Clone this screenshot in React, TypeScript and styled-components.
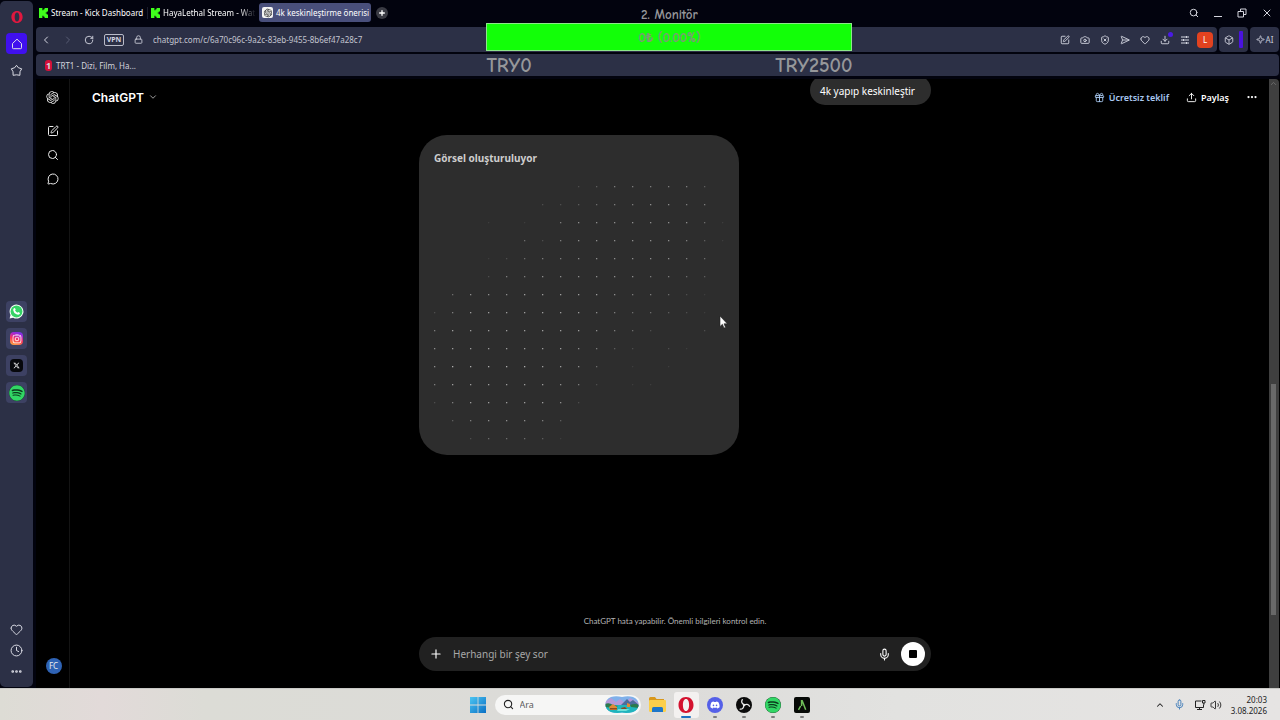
import React from 'react';
import styled, { createGlobalStyle } from 'styled-components';
import {
  ChevronLeft, ChevronRight, ChevronDown, ChevronUp, RotateCw, Lock, Plus, Search, SquarePen, Camera, ShieldX,
  SendHorizontal, Heart, Download, Box, Clock, Ellipsis, X, Gift, Mic, MessageCircle, Upload, Volume2, Sparkle,
} from 'lucide-react';
import { FaInstagram, FaXTwitter, FaSpotify, FaDiscord } from 'react-icons/fa6';
import { RiOpenaiFill } from 'react-icons/ri';

const ui = `"Segoe UI", "Noto Sans", "Open Sans", sans-serif`;

const GlobalStyle = createGlobalStyle`
  * { box-sizing: border-box; }
  body { margin: 0; background: #02030e; font-family: ${ui}; font-size: 8px; color: #fff; }
  button, input { font: inherit; color: inherit; border: 0; background: none; padding: 0; margin: 0; outline: 0; }
  a { color: inherit; text-decoration: none; }
  svg { display: block; flex: none; }
`;

const Desktop = styled.div`
  position: relative;
  min-height: 100vh;
  display: flex;
  flex-direction: column;
`;

const Browser = styled.div`
  flex: 1;
  display: flex;
  gap: 3px;
`;

const OperaSidebar = styled.nav`
  width: 33px;
  margin: 1px 0;
  padding: 5px 0;
  border-radius: 5px;
  background: #2c3046;
  color: #dcdde6;
  display: flex;
  flex-direction: column;
  align-items: center;
`;

const SideButton = styled.button<{ $bg?: string }>`
  width: 21px;
  height: 21px;
  border-radius: 4px;
  background: ${(p) => p.$bg ?? 'transparent'};
  display: grid;
  place-items: center;
`;

const SideGroup = styled.div<{ $gap: number; $top?: string }>`
  display: flex;
  flex-direction: column;
  align-items: center;
  gap: ${(p) => p.$gap}px;
  margin-top: ${(p) => p.$top ?? '0'};
`;

const AppBadge = styled.span<{ $bg: string; $round?: boolean }>`
  width: ${(p) => (p.$round ? 16 : 13)}px;
  height: ${(p) => (p.$round ? 16 : 13)}px;
  border-radius: ${(p) => (p.$round ? '50%' : '4px')};
  background: ${(p) => p.$bg};
  color: #fff;
  display: grid;
  place-items: center;
`;

const Window = styled.div`
  flex: 1;
  min-width: 0;
  display: flex;
  flex-direction: column;
`;

const TabStrip = styled.div`
  height: 27px;
  padding: 3px 7px 5px 0;
  display: flex;
  align-items: center;
`;

const Tab = styled.button<{ $active?: boolean; $width: number }>`
  width: ${(p) => p.$width}px;
  height: 19px;
  padding: 0 3px;
  border-radius: 3px;
  background: ${(p) => (p.$active ? '#494f7b' : 'transparent')};
  display: flex;
  align-items: center;
  gap: 3px;
  white-space: nowrap;
`;

const TabTitle = styled.span<{ $fade?: boolean }>`
  flex: 1;
  min-width: 0;
  text-align: left;
  ${(p) => p.$fade && 'mask-image: linear-gradient(90deg, #000 82%, transparent);'}
`;

const TabDivider = styled.span`
  width: 1px;
  height: 12px;
  background: #1b1d2c;
`;

const GptIcon = styled.span`
  width: 11px;
  height: 11px;
  border-radius: 2px;
  background: #f4f4f4;
  color: #222;
  display: grid;
  place-items: center;
`;

const NewTab = styled.button`
  width: 12px;
  height: 12px;
  margin-left: 5px;
  border-radius: 50%;
  background: #3a3b44;
  display: grid;
  place-items: center;
`;

const WindowControls = styled.div`
  margin-left: auto;
  display: flex;
  align-items: center;
  gap: 14px;
  color: #d4d5dd;
`;

const BarRow = styled.div`
  display: flex;
  gap: 2px;
  height: 25px;
  padding-right: 1px;
`;

const Toolbar = styled.div`
  flex: 1;
  padding: 0 4px;
  border-radius: 4px;
  background: #2c3046;
  color: #d3d5e0;
  display: flex;
  align-items: center;
  gap: 7px;
`;

const Tools = styled.div<{ $grow?: boolean }>`
  flex: ${(p) => (p.$grow ? 1 : 'none')};
  display: flex;
  align-items: center;
  gap: 10px;
`;

const PlainButton = styled.button`
  position: relative;
  display: grid;
  place-items: center;
`;

const VpnBadge = styled.button`
  width: 20px;
  height: 12px;
  border: 1px solid #b9bbc9;
  border-radius: 2px;
  font-size: 7px;
  line-height: 10px;
  font-weight: 700;
`;

const Address = styled.input`
  flex: 1;
  min-width: 0;
  color: #c3c5d0;
`;

const NotifyDot = styled.span`
  position: absolute;
  top: -3px;
  right: -3px;
  width: 5px;
  height: 5px;
  border-radius: 50%;
  background: #4a1ae6;
`;

const ProfileButton = styled.button`
  width: 16px;
  height: 16px;
  border-radius: 4px;
  background: #e2421f;
  color: #fff;
`;

const SidePill = styled.button`
  width: 29px;
  border-radius: 4px;
  background: #2c3046;
  color: #c9cbd8;
  display: flex;
  align-items: center;
  justify-content: center;
  gap: 1px;
`;

const PillMark = styled.span`
  width: 4px;
  height: 17px;
  margin-left: 4px;
  border-radius: 1px;
  background: #4a12e0;
`;

const BookmarkBar = styled.div`
  height: 22px;
  margin: 2px 1px 3px 0;
  padding: 0 9px;
  border-radius: 4px;
  background: #2c3046;
  color: #d4d5de;
  display: flex;
  align-items: center;
`;

const Bookmark = styled.a`
  display: flex;
  align-items: center;
  gap: 4px;
`;

const TrtIcon = styled.span`
  width: 7px;
  height: 11px;
  border-radius: 3px;
  background: #d5103a;
  font: 700 9px/11px ${ui};
  text-align: center;
`;

const Page = styled.div`
  position: relative;
  flex: 1;
  display: flex;
  background: #000;
`;

const Rail = styled.nav`
  width: 34px;
  padding: 11px 0 14px;
  border-right: 1px solid #141414;
  display: flex;
  flex-direction: column;
  align-items: center;
  color: #ececec;
`;

const Avatar = styled.button`
  width: 16px;
  height: 16px;
  margin: auto 0 0 2px;
  border-radius: 50%;
  background: #2f63b5;
  line-height: 16px;
`;

const Chat = styled.main`
  position: relative;
  flex: 1;
  display: flex;
  flex-direction: column;
  align-items: center;
  overflow: hidden;
  padding-bottom: 17px;
`;

const ChatHeader = styled.header`
  position: absolute;
  top: 0;
  left: 0;
  right: 0;
  height: 36px;
  padding: 0 22px;
  display: flex;
  align-items: center;
  gap: 17px;
  font-weight: 600;
`;

const HeaderButton = styled.button<{ $color?: string }>`
  display: flex;
  align-items: center;
  gap: 4px;
  color: ${(p) => p.$color ?? '#fff'};
  font-size: 9px;
`;

const ModelButton = styled(HeaderButton)`
  margin-right: auto;
  font-family: Inter, ${ui};
  font-size: 12px;
`;

const Thread = styled.section`
  width: 512px;
  max-width: 100%;
  flex: 1;
  display: flex;
  flex-direction: column;
  gap: 30px;
`;

const Bubble = styled.div`
  align-self: flex-end;
  margin-top: -4px;
  height: 30px;
  padding: 1px 16px 0 10px;
  border-radius: 15px;
  background: #2d2d2d;
  font-size: 10px;
  line-height: 30px;
`;

const ImageCard = styled.article`
  width: 320px;
  height: 320px;
  padding: 15px;
  border-radius: 28px;
  background: #2d2d2d;
`;

const CardTitle = styled.h2`
  margin: 0 0 19px;
  font-size: 10px;
  line-height: 17px;
  font-weight: 700;
  color: #cdcdcd;
`;

const Disclaimer = styled.p`
  margin: 0 0 9px;
  font-family: Lato, ${ui};
  line-height: 14px;
  color: #b4b4b4;
`;

const Composer = styled.form`
  width: 512px;
  max-width: 100%;
  height: 34px;
  padding: 0 6px 0 10px;
  border-radius: 17px;
  background: #212121;
  display: flex;
  align-items: center;
  gap: 10px;
`;

const Prompt = styled.input`
  flex: 1;
  font-size: 10px;
  &::placeholder { color: #a8a8a8; opacity: 1; }
`;

const StopButton = styled.button`
  width: 24px;
  height: 24px;
  border-radius: 50%;
  background: #fff;
  display: grid;
  place-items: center;
  &::after { content: ''; width: 8px; height: 8px; border-radius: 1px; background: #000; }
`;

const ScrollTrack = styled.div`
  position: absolute;
  top: 0;
  bottom: 0;
  right: 1px;
  width: 10px;
  background: #3f3f3f;
  border-radius: 0 4px 0 0;
  color: #777;
`;

const ScrollThumb = styled.div`
  position: absolute;
  top: 50%;
  height: 38%;
  left: 2px;
  right: 3px;
  background: #696969;
`;

const Goal = styled.aside`
  position: absolute;
  top: 7px;
  left: 38%;
  width: 366px;
  font-family: "Comic Sans MS", "Comic Neue", ${ui};
  font-weight: 700;
  color: #96979a;
  text-align: center;
  pointer-events: none;
`;

const GoalTitle = styled.div`
  font-size: 13px;
  line-height: 16px;
`;

const GoalBar = styled.div`
  height: 28px;
  border: 1px solid #8fe68b;
  background: #12ff08;
  color: #7f9a78;
  font-size: 13px;
  line-height: 27px;
`;

const GoalRange = styled.div`
  display: flex;
  justify-content: space-between;
  font-size: 20px;
  line-height: 30px;
`;

const Pointer = styled.svg`
  position: absolute;
  left: 719px;
  top: 315px;
`;

const Taskbar = styled.footer`
  height: 32px;
  padding: 0 13px;
  background: linear-gradient(90deg, #dddcd5, #e2dad9 8%, #dcdcd6 16%, #dcdbd9 50%, #e2e2e0 70%, #e6e4e3);
  border-top: 1px solid #c9c9c6;
  color: #222;
  display: grid;
  grid-template-columns: 1fr auto 1fr;
  align-items: center;
`;

const Apps = styled.div`
  grid-column: 2;
  display: flex;
  align-items: center;
  gap: 4px;
`;

const TaskSearch = styled.label`
  width: 146px;
  height: 20px;
  padding: 0 2px 0 8px;
  border-radius: 10px;
  background: #f6f6f5;
  display: flex;
  align-items: center;
  gap: 6px;
`;

const TaskInput = styled.input`
  flex: 1;
  min-width: 0;
  font-size: 9px;
  &::placeholder { color: #5c5c5c; opacity: 1; }
`;

const TaskButton = styled.button<{ $state?: 'open' | 'active' }>`
  position: relative;
  width: 25px;
  height: 26px;
  border-radius: 3px;
  background: ${(p) => (p.$state === 'active' ? '#f3f1f0' : 'transparent')};
  display: grid;
  place-items: center;
  &::after {
    content: '';
    position: absolute;
    bottom: 0;
    height: 2px;
    border-radius: 1px;
    width: ${(p) => (p.$state === 'active' ? 10 : 4)}px;
    background: ${(p) => (p.$state === 'active' ? '#1b6fc0' : p.$state ? '#7e7e7e' : 'transparent')};
  }
`;

const Tray = styled.div`
  justify-self: end;
  display: flex;
  align-items: center;
  gap: 9px;
`;

const TrayPair = styled.div`
  display: flex;
  gap: 4px;
`;

const ClockText = styled.time`
  line-height: 11px;
  text-align: right;
`;

// Brightness of each dot in the loading pattern, 0 (hidden) to 9.
const dotRows = [
  '00000000235555530',
  '00000022345566550',
  '00010105666666641',
  '00000425666666531',
  '00012455666666540',
  '00025566666655430',
  '04666777776554210',
  '25777777765443210',
  '57777777765420020',
  '67777777653202100',
  '68888877640101000',
  '57777776520110000',
  '25777776200000000',
  '03566653000000000',
  '00244431000000000',
];

const KickLogo = () => (
  <svg width="9" height="10" viewBox="0 0 9 10" fill="#3fff1c">
    <path d="M0 0h3.4v2.3h1.1V1.2h1.1V0H9v3.4H7.8v1.1H6.7v1h1.1v1.1H9V10H5.6V8.8H4.5V7.7H3.4V10H0z" />
  </svg>
);

const OperaLogo = ({ size, color }: { size: number; color: string }) => (
  <svg width={size} height={size} viewBox="0 0 16 16">
    <path fill={color} fillRule="evenodd" d="M8 0C3.500 0 .5 3.500 .5 8s3 8 7.500 8 7.500-3.500 7.500-8S12.500 0 8 0zm0 2c2 0 3.100 2.600 3.100 6S10 14 8 14 4.900 11.400 4.900 8 6 2 8 2z" />
  </svg>
);

const Pentagon = () => (
  <svg width="13" height="13" viewBox="0 0 13 13" fill="none" stroke="currentColor" strokeLinejoin="round">
    <path d="M6.500 1.300 8.300 3.700 11.700 4.800 10 7.700 9.900 11.300 6.500 10.800 3.100 11.300 3 7.700 1.300 4.800 4.700 3.700z" />
  </svg>
);

const HomeIcon = () => (
  <svg width="12" height="12" viewBox="0 0 12 12" fill="none" stroke="currentColor" strokeLinejoin="round">
    <path d="M1.500 5.500 6 1.200l4.500 4.300v4.300q0 .9-.9.9H2.400q-.9 0-.9-.9z" />
  </svg>
);

const SettingsLines = () => (
  <svg width="10" height="10" viewBox="0 0 10 10" stroke="currentColor" fill="none">
    <path d="M1 2h8M1 5h8M1 8h8M6.500 1v2M3.500 4v2M6.500 7v2" />
  </svg>
);

const WindowsLogo = () => (
  <svg width="16" height="16" viewBox="0 0 16 16">
    <defs>
      <linearGradient id="win" x1="0" y1="0" x2="1" y2="1">
        <stop offset="0" stopColor="#4cc5f2" />
        <stop offset="1" stopColor="#0a6fc4" />
      </linearGradient>
    </defs>
    <path fill="url(#win)" d="M0 0h7.600v7.600H0zM8.400 0H16v7.600H8.400zM0 8.400h7.600V16H0zM8.400 8.400H16V16H8.400z" />
  </svg>
);

const Landscape = () => (
  <svg width="34" height="17" viewBox="0 0 34 17">
    <defs>
      <clipPath id="scene"><path d="M6 1q5-1.500 11 0 6-1.500 11 0 5.500 2 5.500 7.500T28 16q-6 1.500-11 .5-6 1-11-.5Q.5 14 .5 8.500T6 1z" /></clipPath>
    </defs>
    <g clipPath="url(#scene)">
      <path fill="#7fb0ea" d="M0 0h34v17H0z" />
      <path fill="#b59ad8" d="M0 6 6 2l5 4 4-3 5 4 5-5 9 5v4H0z" />
      <path fill="#4d6c9c" d="m16 9 6-6 3 3 3-2 6 5v2H16z" />
      <path fill="#20b5bd" d="M0 9h34v8H0z" />
      <path fill="#2b7a4b" d="M0 8q4-2 8 1l5 1-4 2-9-1zM25 9q5-2 9 0v3l-8-1z" />
      <path fill="#e08a35" d="m4 11 4-3 4 3v3H5zM22 7l3 1v3h-3z" />
      <path fill="#8a4a22" d="M5 12h7v1.500H5zM16 12l4-1 2 2-5 1z" />
      <path fill="#6fe0d8" d="M13 13h12l-4 2h-9z" />
    </g>
  </svg>
);

const FolderIcon = () => (
  <svg width="17" height="15" viewBox="0 0 17 15">
    <path fill="#d9981c" d="M0 1.500Q0 0 1.500 0H6l1.500 2H15v5H0z" />
    <path fill="#fbcf4b" d="M0 4q0-1 1-1h15q1 0 1 1v9.500q0 1.500-1.500 1.500h-14Q0 15 0 13.500z" />
    <path fill="#1d76c9" d="M3 15v-3.500q0-1.500 1.500-1.500h8q1.500 0 1.500 1.500V15z" />
  </svg>
);

const ObsIcon = () => (
  <svg width="16" height="16" viewBox="0 0 16 16">
    <circle cx="8" cy="8" r="8" fill="#0b0b0b" />
    {[0, 120, 240].map((turn) => (
      <path
        key={turn}
        transform={`rotate(${turn} 8 8)`}
        fill="none"
        stroke="#e8e8e8"
        strokeWidth="1.300"
        strokeLinecap="round"
        d="M8 7.600C5.800 6.800 5 4.600 6.300 2.600"
      />
    ))}
    <circle cx="8" cy="8" r="1.200" fill="#e8e8e8" />
  </svg>
);

const ArenaIcon = () => (
  <svg width="16" height="16" viewBox="0 0 16 16">
    <rect width="16" height="16" rx="2" fill="#060906" />
    <path fill="none" stroke="#6fbf58" strokeWidth="1.500" d="M4.500 12.800 6.600 9M6.800 3.800h1.400l3.500 9M7.600 4.500v4.500" />
  </svg>
);

const DisplayIcon = () => (
  <svg width="12" height="12" viewBox="0 0 12 12" fill="none" stroke="currentColor">
    <path d="M7.500 2h-6v6.500h8V6M5.500 8.500v2M3 10.500h5M8.500 1.500h2.500v2.500H8.500zM9.800 4v2" />
  </svg>
);

const DotField = () => (
  <svg width="290" height="254" viewBox="0 0 290 254">
    {dotRows.map((row, y) =>
      row.split('').map((level, x) => level !== '0' && (
        <rect key={`${x}-${y}`} x={x * 18} y={y * 18} width="1.300" height="1.300" fill="#fff" opacity={Number(level) / 13} />
      )),
    )}
  </svg>
);

export default function App() {
  return (
    <Desktop>
      <GlobalStyle />
      <Browser>
        <OperaSidebar>
          <SideGroup $gap={6}>
            <SideButton aria-label="Opera"><OperaLogo size={12} color="#e0183f" /></SideButton>
            <SideButton aria-label="Home" $bg="#4010ee"><HomeIcon /></SideButton>
            <SideButton aria-label="Pinboards"><Pentagon /></SideButton>
          </SideGroup>
          <SideGroup $gap={6} $top="220px">
            <SideButton aria-label="WhatsApp" $bg="#3d4163">
              <svg width="15" height="15" viewBox="0 0 15 15">
                <path fill="#f4fff6" d="M7.500.5a7 7 0 1 1-3.300 13.200L.6 14.500l.9-3.500A7 7 0 0 1 7.500.5z" />
                <circle cx="7.500" cy="7.500" r="5.900" fill="#35d366" />
                <path fill="#fff" d="M5 4.200q.8-.6 1.200.2l.5 1.200-.6.9q.8 1.500 2.300 2.200l.8-.8 1.500.8q.5.400 0 1.200-1.100 1.400-3.300.4Q4.500 8.700 4.200 6.200 4.200 4.900 5 4.200z" />
              </svg>
            </SideButton>
            <SideButton aria-label="Instagram" $bg="#3d4163">
              <AppBadge $bg="linear-gradient(20deg, #fdb43c, #f5345d 45%, #a228d8 75%, #5b3be8)"><FaInstagram size={10} /></AppBadge>
            </SideButton>
            <SideButton aria-label="X" $bg="#3d4163"><AppBadge $bg="#07080c"><FaXTwitter size={7} /></AppBadge></SideButton>
            <SideButton aria-label="Spotify" $bg="#3d4163"><AppBadge $round $bg="#0b3a1c"><FaSpotify size={16} color="#32d665" /></AppBadge></SideButton>
          </SideGroup>
          <SideGroup $gap={0} $top="auto">
            <SideButton aria-label="Favourites"><Heart size={13} strokeWidth={1.8} /></SideButton>
            <SideButton aria-label="History"><Clock size={13} strokeWidth={1.8} /></SideButton>
            <SideButton aria-label="More"><Ellipsis size={13} strokeWidth={3} /></SideButton>
          </SideGroup>
        </OperaSidebar>

        <Window>
          <TabStrip>
            <Tab $width={111}><KickLogo /><TabTitle>Stream - Kick Dashboard</TabTitle></Tab>
            <TabDivider />
            <Tab $width={111}><KickLogo /><TabTitle $fade>HayaLethal Stream - Watc</TabTitle></Tab>
            <Tab $active $width={112}>
              <GptIcon><RiOpenaiFill size={10} /></GptIcon>
              <TabTitle>4k keskinleştirme önerisi</TabTitle>
            </Tab>
            <NewTab aria-label="New tab"><Plus size={8} strokeWidth={4} /></NewTab>
            <WindowControls>
              <PlainButton aria-label="Search tabs"><Search size={10} strokeWidth={2.400} /></PlainButton>
              <PlainButton aria-label="Minimize"><svg width="10" height="10" viewBox="0 0 10 10" stroke="currentColor"><path d="M1 8.500h8" /></svg></PlainButton>
              <PlainButton aria-label="Restore"><svg width="10" height="10" viewBox="0 0 10 10" fill="none" stroke="currentColor"><path d="M1 3.500h5.500V9H1zM3.500 3.500V1H9v5.500H6.500" /></svg></PlainButton>
              <PlainButton aria-label="Close"><X size={12} strokeWidth={2} /></PlainButton>
            </WindowControls>
          </TabStrip>

          <BarRow>
            <Toolbar>
              <Tools $grow>
                <PlainButton aria-label="Back"><ChevronLeft size={12} strokeWidth={2} /></PlainButton>
                <PlainButton aria-label="Forward" disabled><ChevronRight size={12} strokeWidth={1.800} color="#5d6179" /></PlainButton>
                <PlainButton aria-label="Reload"><RotateCw size={10} strokeWidth={2.200} /></PlainButton>
                <VpnBadge>VPN</VpnBadge>
                <Lock size={9} strokeWidth={2.200} />
                <Address aria-label="Address" defaultValue="chatgpt.com/c/6a70c96c-9a2c-83eb-9455-8b6ef47a28c7" />
                <PlainButton aria-label="Note"><SquarePen size={10} strokeWidth={2.200} /></PlainButton>
                <PlainButton aria-label="Snapshot"><Camera size={10} strokeWidth={2.200} /></PlainButton>
                <PlainButton aria-label="Ad blocker"><ShieldX size={10} strokeWidth={2.200} /></PlainButton>
                <PlainButton aria-label="Send"><SendHorizontal size={10} strokeWidth={2.200} /></PlainButton>
                <PlainButton aria-label="Favourite"><Heart size={10} strokeWidth={2.200} /></PlainButton>
                <PlainButton aria-label="Downloads"><Download size={10} strokeWidth={2.200} /><NotifyDot /></PlainButton>
                <PlainButton aria-label="Easy setup"><SettingsLines /></PlainButton>
              </Tools>
              <ProfileButton aria-label="Profile">L</ProfileButton>
            </Toolbar>
            <SidePill aria-label="Extensions"><Box size={10} strokeWidth={2.200} /><PillMark /></SidePill>
            <SidePill><Sparkle size={9} strokeWidth={2.200} />AI</SidePill>
          </BarRow>

          <BookmarkBar>
            <Bookmark href="#trt1"><TrtIcon>1</TrtIcon>TRT1 - Dizi, Film, Ha...</Bookmark>
          </BookmarkBar>

          <Page>
            <Rail>
              <PlainButton aria-label="ChatGPT"><RiOpenaiFill size={15} /></PlainButton>
              <SideGroup $gap={12} $top="20px">
                <PlainButton aria-label="New chat"><SquarePen size={12} /></PlainButton>
                <PlainButton aria-label="Search chats"><Search size={12} /></PlainButton>
                <PlainButton aria-label="Chats"><MessageCircle size={12} /></PlainButton>
              </SideGroup>
              <Avatar>FC</Avatar>
            </Rail>

            <Chat>
              <Thread>
                <Bubble>4k yapıp keskinleştir</Bubble>
                <ImageCard>
                  <CardTitle>Görsel oluşturuluyor</CardTitle>
                  <DotField />
                </ImageCard>
              </Thread>
              <Disclaimer>ChatGPT hata yapabilir. Önemli bilgileri kontrol edin.</Disclaimer>
              <Composer>
                <PlainButton type="button" aria-label="Add"><Plus size={14} /></PlainButton>
                <Prompt aria-label="Message" placeholder="Herhangi bir şey sor" />
                <PlainButton type="button" aria-label="Dictate"><Mic size={13} /></PlainButton>
                <StopButton type="button" aria-label="Stop" />
              </Composer>
              <ChatHeader>
                <ModelButton>ChatGPT <ChevronDown size={10} color="#bbb" /></ModelButton>
                <HeaderButton $color="#a9c8f0"><Gift size={11} />Ücretsiz teklif</HeaderButton>
                <HeaderButton><Upload size={11} />Paylaş</HeaderButton>
                <HeaderButton aria-label="More"><Ellipsis size={12} strokeWidth={2.500} /></HeaderButton>
              </ChatHeader>
            </Chat>
            <ScrollTrack>
              <ChevronUp size={9} />
              <ScrollThumb />
            </ScrollTrack>
          </Page>
        </Window>
      </Browser>

      <Taskbar>
        <Apps>
          <TaskButton aria-label="Start"><WindowsLogo /></TaskButton>
          <TaskSearch>
            <Search size={11} strokeWidth={2.400} />
            <TaskInput aria-label="Search" placeholder="Ara" />
            <Landscape />
          </TaskSearch>
          <TaskButton aria-label="Files"><FolderIcon /></TaskButton>
          <TaskButton aria-label="Opera" $state="active"><OperaLogo size={16} color="#d4122f" /></TaskButton>
          <TaskButton aria-label="Discord" $state="open"><AppBadge $round $bg="#5560e8"><FaDiscord size={10} /></AppBadge></TaskButton>
          <TaskButton aria-label="OBS Studio" $state="open"><ObsIcon /></TaskButton>
          <TaskButton aria-label="Spotify" $state="open"><AppBadge $round $bg="#0b3a1c"><FaSpotify size={16} color="#32d665" /></AppBadge></TaskButton>
          <TaskButton aria-label="Arena" $state="open"><ArenaIcon /></TaskButton>
        </Apps>
        <Tray>
          <ChevronUp size={10} strokeWidth={2.500} />
          <Mic size={11} color="#3a78b8" />
          <TrayPair><DisplayIcon /><Volume2 size={12} strokeWidth={1.800} /></TrayPair>
          <ClockText>20:03<br />3.08.2026</ClockText>
        </Tray>
      </Taskbar>

      <Goal>
        <GoalTitle>2. Monitör</GoalTitle>
        <GoalBar>0₺ (0.00%)</GoalBar>
        <GoalRange><span>TRY0</span><span>TRY2500</span></GoalRange>
      </Goal>
      <Pointer width="9" height="14" viewBox="0 0 9 14"><path fill="#fff" stroke="#222" strokeWidth=".6" d="M1 1v10.500l2.400-2.200 1.600 3.800 1.600-.7L5 8.800h3.300z" /></Pointer>
    </Desktop>
  );
}
